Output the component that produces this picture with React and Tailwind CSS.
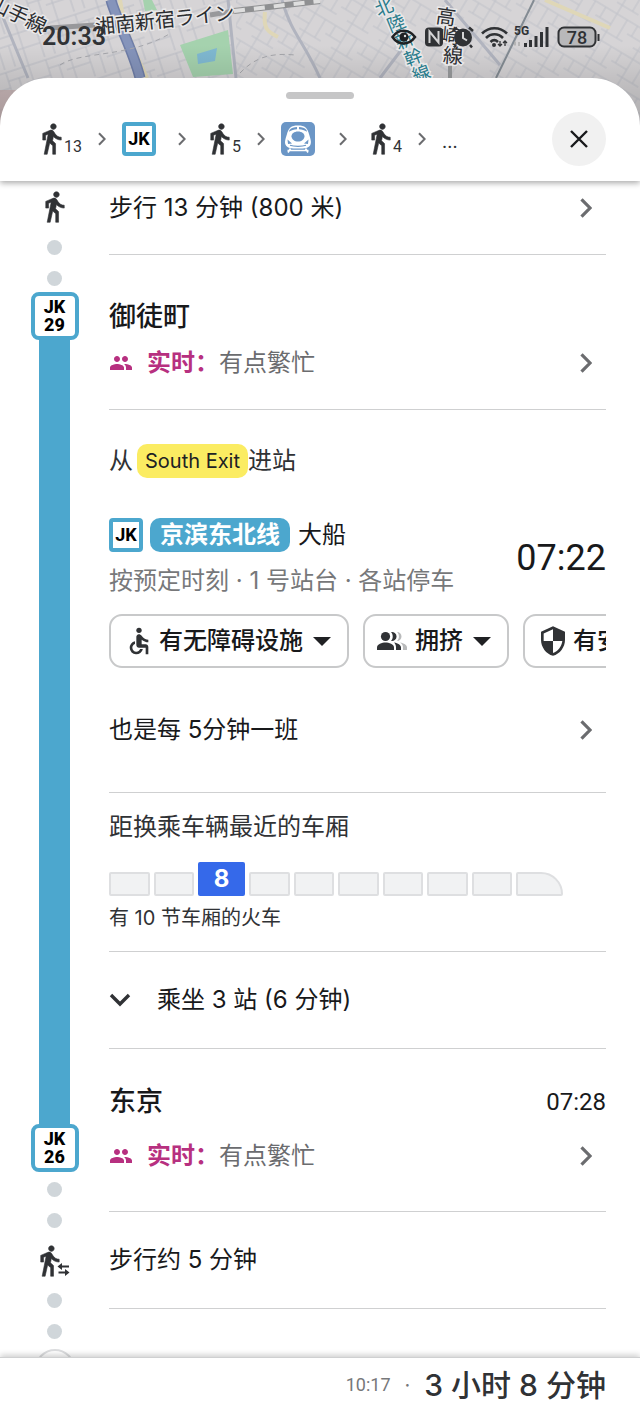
import React, { useState } from 'react';
import { MdAccessible, MdPeople, MdSecurity } from 'react-icons/md';

const CARRIAGES = [10, 9, 8, 7, 6, 5, 4, 3, 2, 1];
const BEST_CARRIAGE = 8;

function ChevronRight({ small = false }) {
  return (
    <svg viewBox="0 0 12 20" className={small ? 'h-3.5 w-2 shrink-0' : 'mr-3.5 h-5 w-3 shrink-0'} fill="none" stroke="#6b6c6f" strokeWidth={small ? 3 : 3.2} aria-hidden="true">
      <path d="M1.5 1.3 10 10l-8.500 8.700" />
    </svg>
  );
}

function WalkIcon() {
  return (
    <svg viewBox="5.500 1 14 22.500" className="h-8 w-5 shrink-0" fill="#303235" stroke="#303235" strokeWidth="0.4" role="img" aria-label="步行">
      <path d="M13.500 5.500c1.100 0 2-.9 2-2s-.9-2-2-2-2 .9-2 2 .9 2 2 2zM9.800 8.900 7 23h2.100l1.800-8 2.100 2v6h2v-7.500l-2.100-2 .6-3C14.800 12 16.800 13 19 13v-2c-1.900 0-3.500-1-4.300-2.400l-1-1.600c-.4-.6-1-1-1.700-1-.3 0-.5.1-.8.1L6 8.300V13h2V9.600l1.800-.7" />
    </svg>
  );
}

function TransferIcon() {
  return (
    <svg viewBox="0 0 30 32" className="h-8 w-[30px] shrink-0" fill="#303235" role="img" aria-label="换乘步行">
      <g transform="translate(-7.800 -1.400) scale(1.42)" stroke="#303235" strokeWidth="0.4">
        <path d="M13.500 5.500c1.100 0 2-.9 2-2s-.9-2-2-2-2 .9-2 2 .9 2 2 2zM9.800 8.900 7 23h2.100l1.800-8 2.100 2v6h2v-7.500l-2.100-2 .6-3C14.800 12 16.800 13 19 13v-2c-1.900 0-3.500-1-4.300-2.400l-1-1.600c-.4-.6-1-1-1.700-1-.3 0-.5.1-.8.1L6 8.300V13h2V9.600l1.800-.7" />
      </g>
      <path d="M17.500 21.500 22 18v2.500h7v2h-7V25zM29.500 27.500 25 24v2.500h-6.500v2H25V31z" />
    </svg>
  );
}

function TrainIcon() {
  return (
    <svg viewBox="0 0 34 34" className="size-[34px] shrink-0" role="img" aria-label="新干线">
      <rect width="34" height="34" rx="5" fill="#6b96c6" />
      <path d="M17 3.500c7 0 9.500 2.500 11 8.500 1.800 5.500 2.600 8.500 1.300 11-1.400 3-5.300 3.500-12.300 3.500S6.100 26 4.700 23c-1.300-2.500-.5-5.500 1.300-11 1.500-6 4-8.500 11-8.500z" fill="#fff" />
      <path d="M8.500 8c2-2 4.500-2.800 7.500-2.900v2.100c-3 .1-5.500.8-8 2.600zM25.500 8c-2-2-4.500-2.800-7.500-2.900v2.100c3 .1 5.500.8 8 2.600z" fill="#6b96c6" />
      <path d="M17 9.500c4 0 6.500 2.200 6.500 4.700 0 3-3 5.300-6.500 5.300s-6.500-2.300-6.500-5.300c0-2.500 2.500-4.700 6.500-4.700z" fill="#6b96c6" />
      <path d="m6.500 17.500 4.500 4-4 .5zM27.500 17.500l-4.500 4 4 .5z" fill="#6b96c6" />
      <path d="M9 23.300c4 1.500 12 1.500 16 0" stroke="#6b96c6" strokeWidth="1.200" fill="none" />
      <path d="M6.500 28.500h21M9.500 26.500 7 30.500M24.500 26.500l2.500 4" stroke="#fff" strokeWidth="1.600" fill="none" />
    </svg>
  );
}

// Three overlapping riders, fading to the right
function CrowdIcon() {
  return (
    <svg viewBox="0 0 30 20" className="mr-1 h-5 w-[30px] shrink-0" aria-hidden="true">
      <g fill="#b9babb">
        <path d="M20 1a4.500 4.500 0 1 1 0 9c2.600-2.500 2.600-6.500 0-9zM23 11.500c4 .7 7 2.500 7 5V19h-4v-2.500c0-2-1-3.600-3-5z" />
      </g>
      <g fill="#303235">
        <circle cx="8.500" cy="5.500" r="4.600" />
        <path d="M0 19v-2.500C0 13 5 11.500 8.500 11.500S17 13 17 16.500V19z" />
        <path d="M14 1a4.600 4.600 0 1 1 0 9c2.300-2.500 2.300-6.500 0-9zM17 11.500c4 .8 7 2.300 7 5V19h-5v-2.500c0-2-.6-3.600-2-5z" />
      </g>
    </svg>
  );
}

function LineSymbol() {
  return (
    <span className="flex size-[34px] shrink-0 items-center justify-center rounded-[4px] border-4 border-[#4ca7ce] bg-white font-['Roboto','Liberation_Sans',sans-serif] text-lg leading-none font-bold text-black">
      JK
    </span>
  );
}

function StationBadge({ number }) {
  return (
    <span className="flex size-12 shrink-0 flex-col items-center justify-center rounded-lg border-4 border-[#4ca7ce] bg-white font-['Roboto','Liberation_Sans',sans-serif] text-lg leading-[18px] font-extrabold text-black">
      <span>JK</span>
      <span>{number}</span>
    </span>
  );
}

function Dot({ className }) {
  return <span className={`size-[15px] shrink-0 rounded-full bg-[#d0d6da] ${className}`} />;
}

function MapBackdrop() {
  return (
    <svg className="absolute inset-0 h-full w-full" viewBox="0 0 640 181" preserveAspectRatio="xMidYMin slice" aria-hidden="true">
      <defs>
        <pattern id="streets-a" width="42" height="34" patternUnits="userSpaceOnUse" patternTransform="rotate(-18)">
          <path d="M0 3h42M0 19h25M25 12h17M7 0v34M25 3v31M36 12v22" stroke="#bcbec6" strokeWidth="1" fill="none" />
        </pattern>
        <pattern id="streets-b" width="37" height="31" patternUnits="userSpaceOnUse" patternTransform="rotate(31)">
          <path d="M0 4h37M0 16h18M12 25h25M5 4v12M18 0v31M30 4v21" stroke="#c0c2c9" strokeWidth="1" fill="none" />
        </pattern>
        <linearGradient id="map-shade" x1="0" y1="0" x2="0" y2="1">
          <stop offset="0" stopColor="#000" stopOpacity="0" />
          <stop offset="0.25" stopColor="#000" stopOpacity="0" />
          <stop offset="0.45" stopColor="#000" stopOpacity="0.1" />
          <stop offset="1" stopColor="#000" stopOpacity="0.3" />
        </linearGradient>
      </defs>
      <rect width="640" height="181" fill="#d6d4d6" />
      <path d="M0 0h232v181H0z" fill="url(#streets-a)" />
      <path d="M236 0h404v181H236z" fill="url(#streets-b)" />
      <path d="m143 0 9 0 5 10-12 1zM180 45l48-15 5 44-40 3z" fill="#a5d2ae" />
      <path d="m197 54 20-6-2 13-17 3z" fill="#80b9d2" />
      <path d="M120 0c5 35 20 62 27 78M265 12c-2 17 3 20 13 25M545 0l65 28" stroke="#dfd7b7" strokeWidth="4" fill="none" />
      <path d="m0 10 28 68M228 0l8 78M282 0c10 35 20 38 38 78M380 78 405 45M445 0l55 65" stroke="#b1b4bf" strokeWidth="3" fill="none" />
      <path d="M111 0c3 14 23 52 29 78" stroke="#6f7ea8" strokeWidth="11" fill="none" />
      <path d="M111 0c3 14 23 52 29 78" stroke="#8594bb" strokeWidth="8" fill="none" />
      <path d="m534 0-38 78" stroke="#838b93" strokeWidth="2" fill="none" />
      <path d="m50 28 45-3M210 15l24-4" stroke="#98989b" strokeWidth="5" fill="none" />
      <path d="m234 11 86-10" stroke="#8f9092" strokeWidth="6" fill="none" />
      <path d="m234 11 86-10" stroke="#dedede" strokeWidth="4" strokeDasharray="11 9" fill="none" />
      <path d="M60 65c20-14 70-7 111-32M240 73c12-12 25-21 55-18" stroke="#a6a7ac" strokeWidth="1" strokeDasharray="5 4" fill="none" />
      <path d="M450 66v14" stroke="#999b9d" strokeWidth="4" />
      <path d="m380 0 46 78" stroke="#e2e2e4" strokeWidth="14" opacity="0.6" />
      <path d="M0 90h40v50H0z" fill="#c9b0b0" opacity="0.7" />
      <rect width="640" height="181" fill="url(#map-shade)" />
      <g fontFamily="'Noto Sans CJK JP', sans-serif" fontSize="20" fill="#2b2d30" stroke="#e9e8e9" strokeWidth="3" paintOrder="stroke">
        <text x="-12" y="8" transform="rotate(26 -12 8)">山手線</text>
        <text x="96" y="34" transform="rotate(-6 96 34)">湘南新宿ライン</text>
        <g textAnchor="middle">
          <text x="446" y="24" transform="rotate(8 446 17)">高</text>
          <text x="450" y="43" transform="rotate(6 450 36)">崎</text>
          <text x="453" y="63" transform="rotate(4 453 56)">線</text>
        </g>
        <g textAnchor="middle" fontSize="18" fill="#297c8c">
          <text x="384" y="14" transform="rotate(-22 384 7)">北</text>
          <text x="396" y="30" transform="rotate(-22 396 23)">陸</text>
          <text x="404" y="47" transform="rotate(-22 404 40)">新</text>
          <text x="413" y="64" transform="rotate(-20 413 57)">幹</text>
          <text x="421" y="80" transform="rotate(-20 421 73)">線</text>
        </g>
      </g>
    </svg>
  );
}

function StatusIcons() {
  return (
    <svg viewBox="0 0 210 24" className="h-6 w-[210px]" fill="#303235" role="img" aria-label="5G，电量 78%">
      <path d="M1.500 12C7 3.500 18 3.500 24 12c-6 8.500-17 8.500-22.500 0z" fill="none" stroke="#1f2123" strokeWidth="2.500" />
      <circle cx="13" cy="12" r="4.500" fill="#1f2123" />
      <circle cx="14" cy="11" r="1.200" fill="#ddd" />
      <rect x="34" y="2.500" width="18" height="19" rx="4" />
      <path d="M38.500 18V6.500l9 11V6" fill="none" stroke="#d4d4d5" strokeWidth="2" />
      <circle cx="72" cy="12.500" r="9" />
      <path d="m62 6 4-3.500M82 6l-4-3.500M65 20l-2 2.500M79 20l2 2.500" stroke="#303235" strokeWidth="2.500" />
      <path d="M72 7v6l4 2.500" fill="none" stroke="#d5d5d6" strokeWidth="2" />
      <g fill="none" stroke="#303235" strokeWidth="2.600">
        <path d="M91 8.500c7-7 18-7 25 0M95 13c5-5 12-5 17 0M99.500 17c2.500-2.500 5-2.500 7.500 0" />
      </g>
      <circle cx="103" cy="20" r="2" />
      <path d="M109 16v5M107 19l2 2 2-2M114 21v-5M112 18l2-2 2 2" fill="none" stroke="#303235" strokeWidth="1.300" />
      <text x="123" y="10" fontFamily="Roboto, sans-serif" fontSize="12" fontWeight="700">5G</text>
      <path d="M124 16.500v4M128 17v4" stroke="#aaa" strokeWidth="1.500" />
      <path d="M133 18h3v4h-3zM138 15h3v7h-3zM143.500 11h3v11h-3zM149 7h3v15h-3zM154.500 2h3v20h-3z" />
      <rect x="167.500" y="2.500" width="37" height="19" rx="5.500" fill="#b8b8ba" stroke="#303235" strokeWidth="2" />
      <path d="M206.500 9h2v7h-2z" />
      <text x="186" y="18.500" textAnchor="middle" fontFamily="Roboto, sans-serif" fontSize="18" fontWeight="500">78</text>
    </svg>
  );
}

function LiveCrowding() {
  return (
    <button type="button" className="flex h-[34px] w-full items-center text-left">
      <MdPeople className="size-6 shrink-0 text-[#b73080]" />
      <span className="ml-3.5 font-bold text-[#b73080]">实时：</span>
      <span className="grow text-[#6b6c6f]">有点繁忙</span>
      <ChevronRight />
    </button>
  );
}

function FilterChip({ icon, label }) {
  return (
    <button type="button" className="flex h-[54px] shrink-0 items-center rounded-[13px] border-2 border-[#c8c9ca] pr-4 pl-3 font-medium whitespace-nowrap text-[#18191b]">
      {icon}
      <span className="mr-2.5 ml-1">{label}</span>
      <svg viewBox="0 0 18 9" className="h-[9px] w-[18px]" fill="#202124" aria-hidden="true">
        <path d="M0 0h18L9 9z" />
      </svg>
    </button>
  );
}

function WalkLeg({ minutes }) {
  return (
    <span className="flex items-end gap-0.5 pl-2">
      <WalkIcon />
      <span className="-mb-0.5 leading-5">{minutes}</span>
    </span>
  );
}

function RouteSummary() {
  return (
    <nav aria-label="路线概览" className="flex items-center gap-4 font-['Roboto','Liberation_Sans',sans-serif] text-base text-[#303235]">
      <WalkLeg minutes={13} />
      <ChevronRight small />
      <span className="pr-1.5">
        <LineSymbol />
      </span>
      <ChevronRight small />
      <WalkLeg minutes={5} />
      <ChevronRight small />
      <span className="pr-2">
        <TrainIcon />
      </span>
      <ChevronRight small />
      <WalkLeg minutes={4} />
      <ChevronRight small />
      <span className="pt-1 text-xl">...</span>
    </nav>
  );
}

function Timeline() {
  return (
    <div className="flex w-[109px] shrink-0 flex-col items-center pt-2.5">
      <WalkIcon />
      <Dot className="mt-[17px]" />
      <Dot className="mt-4" />
      <span className="mt-1.5 flex shrink-0">
        <StationBadge number={29} />
      </span>
      <span className="w-[31px] grow bg-[#4ca7ce]" />
      <StationBadge number={26} />
      <Dot className="mt-2.5" />
      <Dot className="mt-4" />
      <span className="mt-[17px] flex shrink-0">
        <TransferIcon />
      </span>
      <Dot className="mt-4" />
      <Dot className="mt-4" />
      <span className="mt-2.5 flex h-2 shrink-0 overflow-hidden">
        <span className="size-10 shrink-0 rounded-full border-2 border-[#dcdddf]" />
      </span>
    </div>
  );
}

function Carriages() {
  return (
    <section className="border-b border-[#cfd0d1] pt-[17px] pb-[19px]">
      <h3 className="leading-[34px] text-[#303235]">距换乘车辆最近的车厢</h3>
      <div className="mt-[18px] flex w-[454px] max-w-full items-end gap-1">
        {CARRIAGES.map((n) => {
          if (n === BEST_CARRIAGE) {
            return (
              <span key={n} className="flex h-[34px] w-[47px] items-center justify-center rounded-[2px] bg-[#3569ea] font-bold text-white">
                {n}
              </span>
            );
          }
          if (n === 1) {
            return <span key={n} className="h-6 w-[47px] rounded-[2px] rounded-tr-[22px] border-2 border-[#dedfe1] bg-[#f1f2f3]" />;
          }
          return <span key={n} className="h-6 flex-1 rounded-[2px] border-2 border-[#dedfe1] bg-[#f1f2f3]" />;
        })}
      </div>
      <p className="mt-2 text-xl text-[#303235]">有 10 节车厢的火车</p>
    </section>
  );
}

export default function App() {
  const [stopsOpen, setStopsOpen] = useState(false);

  return (
    <div className="flex min-h-screen flex-col bg-white font-['Inter','Noto_Sans_CJK_SC',sans-serif] text-2xl text-[#18191b]">
      <header className="relative z-10 shadow-[0_2px_6px_rgba(0,0,0,0.35)]">
        <MapBackdrop />
        <div className="relative flex h-[78px] items-center justify-between pr-[39px] pb-1 pl-[42px]">
          <span className="font-['Roboto','Liberation_Sans',sans-serif] text-[25px] font-semibold text-[#303235]">20:33</span>
          <StatusIcons />
        </div>
        <div className="relative rounded-t-[48px] bg-white px-[34px] pt-3.5 pb-[15px]">
          <div className="mx-auto h-[7px] w-[68px] rounded-full bg-[#c6c6c7]" />
          <div className="mt-[13px] flex items-center justify-between">
            <RouteSummary />
            <button type="button" aria-label="关闭" className="flex size-[54px] shrink-0 items-center justify-center rounded-full bg-[#f1f1f1]">
              <svg viewBox="0 0 18 18" className="size-[18px]" stroke="#18191b" strokeWidth="2.400" aria-hidden="true">
                <path d="m1 1 16 16M17 1 1 17" />
              </svg>
            </button>
          </div>
        </div>
      </header>

      <main className="flex grow overflow-hidden pr-[34px]">
        <Timeline />

        <div className="min-w-0 grow pb-12">
          <section className="border-b border-[#cfd0d1] pt-2.5 pb-[29px]">
            <button type="button" className="flex h-[34px] w-full items-center justify-between text-left">
              步行 13 分钟 (800 米)
              <ChevronRight />
            </button>
          </section>

          <section className="border-b border-[#cfd0d1] pt-[45px] pb-[29px]">
            <h2 className="text-[27px] leading-[34px] font-medium">御徒町</h2>
            <div className="mt-3">
              <LiveCrowding />
            </div>
          </section>

          <section className="border-b border-[#cfd0d1] pt-[34px] pb-[45px]">
            <p className="flex h-[34px] items-center text-[#303235]">
              从
              <span className="ml-1 h-[34px] rounded-[10px] bg-[#fbec62] px-2 text-xl leading-[34px] text-[#202124]">South Exit</span>
              进站
            </p>

            <div className="mt-10 flex items-center justify-between">
              <div>
                <div className="flex h-[34px] items-center">
                  <LineSymbol />
                  <span className="ml-[7px] h-[34px] rounded-[10px] bg-[#4ca7ce] px-2.5 leading-[34px] font-bold text-white">京滨东北线</span>
                  <span className="ml-2">大船</span>
                </div>
                <p className="mt-3 leading-[34px] text-[#77787a]">按预定时刻 · 1 号站台 · 各站停车</p>
              </div>
              <time className="font-['Roboto','Liberation_Sans',sans-serif] text-4xl">07:22</time>
            </div>

            <div className="mt-4 flex gap-3.5 overflow-hidden">
              <FilterChip icon={<MdAccessible className="size-8 text-[#303235]" />} label="有无障碍设施" />
              <FilterChip icon={<CrowdIcon />} label="拥挤" />
              <FilterChip icon={<MdSecurity className="size-8 text-[#303235]" />} label="有安保人员" />
            </div>

            <button type="button" className="mt-[45px] flex h-[34px] w-full items-center justify-between text-left">
              也是每 5分钟一班
              <ChevronRight />
            </button>
          </section>

          <Carriages />

          <section className="border-b border-[#cfd0d1]">
            <button type="button" aria-expanded={stopsOpen} onClick={() => setStopsOpen(!stopsOpen)} className="flex h-24 w-full items-center text-left">
              <svg viewBox="0 0 22 14" className="h-3.5 w-[22px]" fill="none" stroke="#303235" strokeWidth="3.400" aria-hidden="true">
                <path d="m2 2 9 9 9-9" />
              </svg>
              <span className="ml-[26px]">乘坐 3 站 (6 分钟)</span>
            </button>
          </section>

          <section className="border-b border-[#cfd0d1] pt-9 pb-[38px]">
            <div className="flex items-center justify-between leading-[34px]">
              <h2 className="text-[27px] font-medium">东京</h2>
              <time className="font-['Roboto','Liberation_Sans',sans-serif]">07:28</time>
            </div>
            <div className="mt-5">
              <LiveCrowding />
            </div>
          </section>

          <section className="flex h-[97px] items-center border-b border-[#cfd0d1]">步行约 5 分钟</section>
        </div>
      </main>

      <footer className="relative z-10 flex h-[54px] items-center justify-end border-t border-[#cfd0d1] bg-white px-[34px] shadow-[0_-2px_6px_rgba(0,0,0,0.2)]">
        <time className="font-['Roboto','Liberation_Sans',sans-serif] text-lg text-[#77787a]">10:17</time>
        <span className="mx-3.5 text-xl text-[#77787a]">·</span>
        <strong className="text-3xl font-medium text-[#303235]">3 小时 8 分钟</strong>
      </footer>
    </div>
  );
}
